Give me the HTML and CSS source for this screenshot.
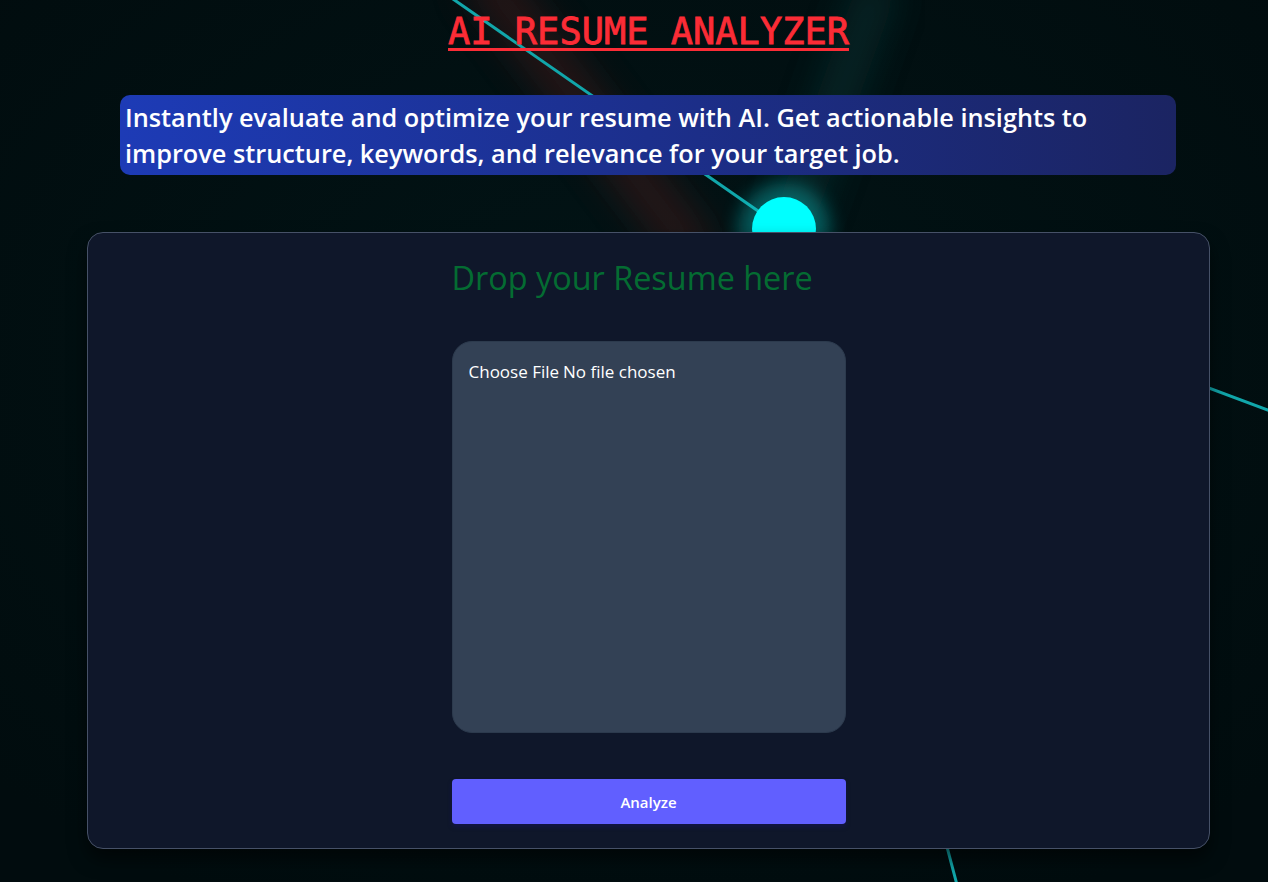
FILE: index.html
```html
<!DOCTYPE html>
<html lang="en">
<head>
<meta charset="utf-8">
<title>AI Resume Analyzer</title>
<link rel="stylesheet" href="styles.css">
</head>
<body>
<svg class="bg-canvas" width="1268" height="882" viewBox="0 0 1268 882" xmlns="http://www.w3.org/2000/svg" aria-hidden="true">
  <defs>
    <filter id="blurBig" x="-50%" y="-50%" width="200%" height="200%"><feGaussianBlur stdDeviation="18"/></filter>
    <filter id="blurMid" x="-50%" y="-50%" width="200%" height="200%"><feGaussianBlur stdDeviation="9"/></filter>
    <radialGradient id="vig" cx="50%" cy="40%" r="70%">
      <stop offset="0%" stop-color="#021416"/>
      <stop offset="100%" stop-color="#010c0e"/>
    </radialGradient>
  </defs>
  <rect width="1268" height="882" fill="url(#vig)"/>
  <line x1="480" y1="-30" x2="700" y2="260" stroke="#5a1e1c" stroke-width="48" opacity="0.4" filter="url(#blurBig)"/>
  <line x1="880" y1="-20" x2="790" y2="230" stroke="#0b4445" stroke-width="40" opacity="0.4" filter="url(#blurBig)"/>
  <g stroke="#11a6aa" stroke-width="3" stroke-linecap="round">
    <line x1="784" y1="229" x2="440" y2="-10"/>
    <line x1="784" y1="229" x2="1300" y2="422"/>
    <line x1="784" y1="229" x2="961" y2="900"/>
  </g>
  <circle cx="784" cy="229" r="46" fill="#0ad7d7" opacity="0.35" filter="url(#blurMid)"/>
  <circle cx="784" cy="229" r="32" fill="#00ffff"/>
</svg>

<main class="page">
  <h1 class="title">AI RESUME ANALYZER</h1>
  <p class="tagline">Instantly evaluate and optimize your resume with AI. Get actionable insights to improve structure, keywords, and relevance for your target job.</p>

  <section class="card">
    <div class="column">
      <h2 class="drop-heading">Drop your Resume here</h2>
      <label class="dropzone">
        <input class="file-input" type="file" accept=".pdf,.doc,.docx">
      </label>
      <button class="analyze-btn" type="button">Analyze</button>
    </div>
  </section>
</main>
</body>
</html>
```

FILE: styles.css
```css
* { box-sizing: border-box; }

html, body {
  margin: 0;
  padding: 0;
  width: 1268px;
  height: 882px;
  overflow: hidden;
  background: #010f12;
}

body {
  position: relative;
  font-family: "Open Sans", "Noto Sans", sans-serif;
  color: #ffffff;
}

.bg-canvas {
  position: absolute;
  left: 0;
  top: 0;
  z-index: 0;
}

.page {
  position: relative;
  z-index: 1;
  width: 1123px;
  margin-left: 87px;
  display: flex;
  flex-direction: column;
}

.title {
  margin: 8px 0 0;
  text-align: center;
  font-family: "DejaVu Sans Mono", "Liberation Mono", monospace;
  font-size: 37px;
  font-weight: 400;
  line-height: 48px;
  color: #fb2c36;
  -webkit-text-stroke: 0.8px #fb2c36;
  text-decoration: underline;
  text-decoration-thickness: 3px;
  text-underline-offset: 4px;
}

.tagline {
  margin: 39px 34px 0 33px;
  padding: 4px 5px;
  border-radius: 10px;
  background: linear-gradient(90deg, #1d3bb6 0%, #1c2f8c 50%, #1b2462 100%);
  font-size: 25.3px;
  font-weight: 600;
  line-height: 36px;
  color: #ffffff;
}

.card {
  margin-top: 57px;
  height: 617px;
  border: 1.5px solid #465167;
  border-radius: 16px;
  background: #0f172a;
  box-shadow: 0 10px 18px rgba(0, 0, 0, 0.55);
  display: flex;
  justify-content: center;
  padding-top: 24px;
}

.column {
  width: 394px;
  display: flex;
  flex-direction: column;
}

.drop-heading {
  margin: 0;
  font-size: 32.4px;
  font-weight: 400;
  line-height: 40px;
  color: #046c32;
}

.dropzone {
  margin-top: 44px;
  height: 392px;
  border-radius: 20px;
  background: #334155;
  border: 1px solid #2c3a4d;
  padding: 18px 16px;
  display: block;
}

.file-input {
  font-family: "Open Sans", "Noto Sans", sans-serif;
  font-size: 17px;
  color: #ffffff;
  background: transparent;
  border: 0;
  padding: 0;
}

.file-input::file-selector-button {
  font-family: inherit;
  font-size: 17px;
  color: #ffffff;
  background: transparent;
  border: 0;
  padding: 0;
  margin: 0 4px 0 0;
}

.analyze-btn {
  margin-top: 46px;
  height: 45px;
  border: 0;
  border-radius: 4px;
  background: #615fff;
  color: #ffffff;
  font-family: "Open Sans", "Noto Sans", sans-serif;
  font-size: 15px;
  font-weight: 600;
  box-shadow: 0 3px 4px rgba(20, 20, 80, 0.7);
}
```
